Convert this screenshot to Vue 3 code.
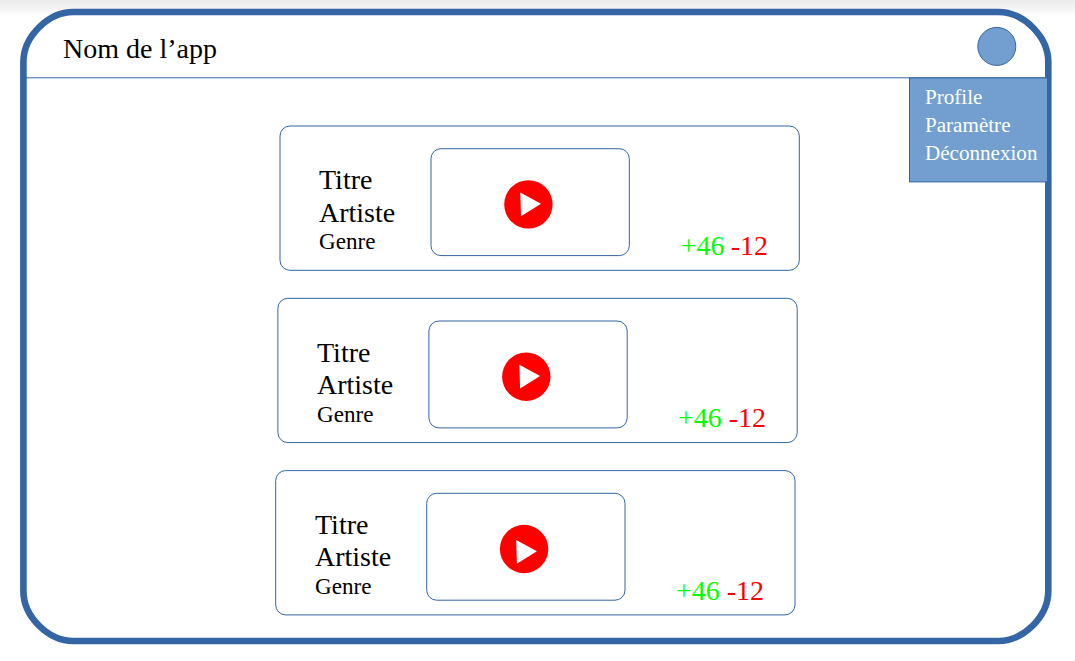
<script setup>
const cards = [
  { id: 1, x: 0, y: 0, tx: -0.2, ty: 0, rows: [0, 0, 0], votes: 0, gap: -0.8 },
  { id: 2, x: -2.1, y: 172.3, tx: -1.1, ty: 172.3, rows: [173, 172, 173], votes: 172, gap: 0 },
  { id: 3, x: -4.3, y: 344.6, tx: -4.3, ty: 347.5, rows: [345, 344, 345], votes: 345, gap: 0 },
].map((c, i) => {
  const top = [0, 172, 344][i]
  return {
    ...c,
    top,
    offsets: c.rows.map((r) => r - top),
    voteOffset: c.votes - top,
    left: [0, -2, -4][i],
  }
})
const menu = ['Profile', 'Paramètre', 'Déconnexion']
</script>

<template>
  <div class="page">
    <svg class="frame" viewBox="0 0 1075 661" aria-hidden="true">
      <path
        d="M73.4 12H998.3C1023.7 12 1048.3 36.6 1048.3 62V591C1048.3 616.4 1023.7 641 998.3 641H73.4C48 641 23.4 616.4 23.4 591V62C23.4 36.6 48 12 73.4 12Z"
        fill="#fff"
        stroke="#3465a4"
        stroke-width="6.6"
      />
      <path d="M26 77.8H1046" stroke="#3465a4" />
    </svg>

    <header class="header">
      <h1 class="brand">Nom de l’app</h1>
      <svg class="avatar" width="42" height="42" viewBox="976 25 42 42">
        <circle cx="996.8" cy="46.4" r="19" fill="#729fcf" stroke="#3465a4" />
      </svg>
      <nav class="menu">
        <svg class="outline" viewBox="0 0 140 106" width="140" height="106" aria-hidden="true">
          <rect x="0.5" y="0.9" width="138" height="104" fill="#729fcf" stroke="#3465a4" />
        </svg>
        <a v-for="item in menu" :key="item">{{ item }}</a>
      </nav>
    </header>

    <main class="list">
      <article v-for="c in cards" :key="c.id" class="card" :style="{ marginLeft: c.left + 'px' }">
        <svg class="outline" width="522" height="148" viewBox="279 125 522 148" aria-hidden="true">
          <g fill="none" stroke="#3465a4" :transform="`translate(${c.x - c.left} ${c.y - c.top})`">
            <rect x="280" y="126" width="519.3" height="144.3" rx="10" />
            <rect x="431" y="148.7" width="198.3" height="106.9" rx="10" />
            <circle cx="528.4" cy="204.4" r="24.2" fill="#f00" stroke="none" />
          </g>
          <path
            d="M520.5 192.5L541.2 203.7L521.2 216.3Z"
            fill="#fff"
            :transform="`translate(${c.tx - c.left} ${c.ty - c.top})`"
          />
        </svg>
        <div class="info">
          <span class="title" :style="{ paddingTop: c.offsets[0] + 'px' }">Titre</span>
          <span class="artist" :style="{ marginTop: c.offsets[1] - c.offsets[0] + 'px' }">Artiste</span>
          <span class="genre" :style="{ marginTop: c.offsets[2] - c.offsets[1] + 'px' }">Genre</span>
        </div>
        <div class="votes" :style="{ paddingTop: c.voteOffset + 'px', wordSpacing: c.gap + 'px' }">
          <span class="up">+46</span> <span class="down">-12</span>
        </div>
      </article>
    </main>
  </div>
</template>

<style>
body {
  margin: 0;
  background: #fff;
}
</style>

<style scoped>
.page {
  position: relative;
  width: 1075px;
  height: 661px;
  overflow: hidden;
  font-family: "Liberation Serif", "Times New Roman", serif;
  color: #000;
  background: linear-gradient(#ebebeb, #f3f3f3 8px, #fff 16px) no-repeat 0 0 / 100% 16px, #fff;
}
.frame {
  position: absolute;
  inset: 0;
  width: 1075px;
  height: 661px;
}
.header {
  position: relative;
  display: flex;
  justify-content: space-between;
  box-sizing: border-box;
  height: 78px;
  padding: 25px 57px 0 63px;
}
.brand {
  margin: 8px 0 0;
  font-size: 28px;
  font-weight: 400;
  line-height: 32px;
  white-space: nowrap;
}
.avatar {
  display: block;
}
.menu {
  position: absolute;
  z-index: 1;
  top: 77px;
  left: 909px;
  display: flex;
  flex-direction: column;
  box-sizing: border-box;
  width: 140px;
  height: 106px;
  padding: 6px 0 0 16px;
  color: #fff;
  font-size: 21.1px;
  line-height: 28px;
}
.menu a {
  position: relative;
}
.list {
  position: relative;
  display: flex;
  flex-direction: column;
  gap: 24px;
  padding: 47px 0 0 279px;
}
.card {
  position: relative;
  display: flex;
  justify-content: space-between;
  box-sizing: border-box;
  width: 522px;
  height: 148px;
  padding: 0 33px 0 40px;
}
.outline {
  position: absolute;
  top: 0;
  left: 0;
}
.info {
  position: relative;
  display: flex;
  flex-direction: column;
  margin-top: 39px;
  font-size: 28px;
  line-height: 32px;
}
.artist {
  position: relative;
  top: 1px;
}
.genre {
  font-size: 23.1px;
  line-height: 26px;
}
.votes {
  position: relative;
  margin-top: 105px;
  font-size: 28px;
  line-height: 32px;
  white-space: nowrap;
}
.up {
  color: #0f0;
}
.down {
  color: #f00;
}
</style>
